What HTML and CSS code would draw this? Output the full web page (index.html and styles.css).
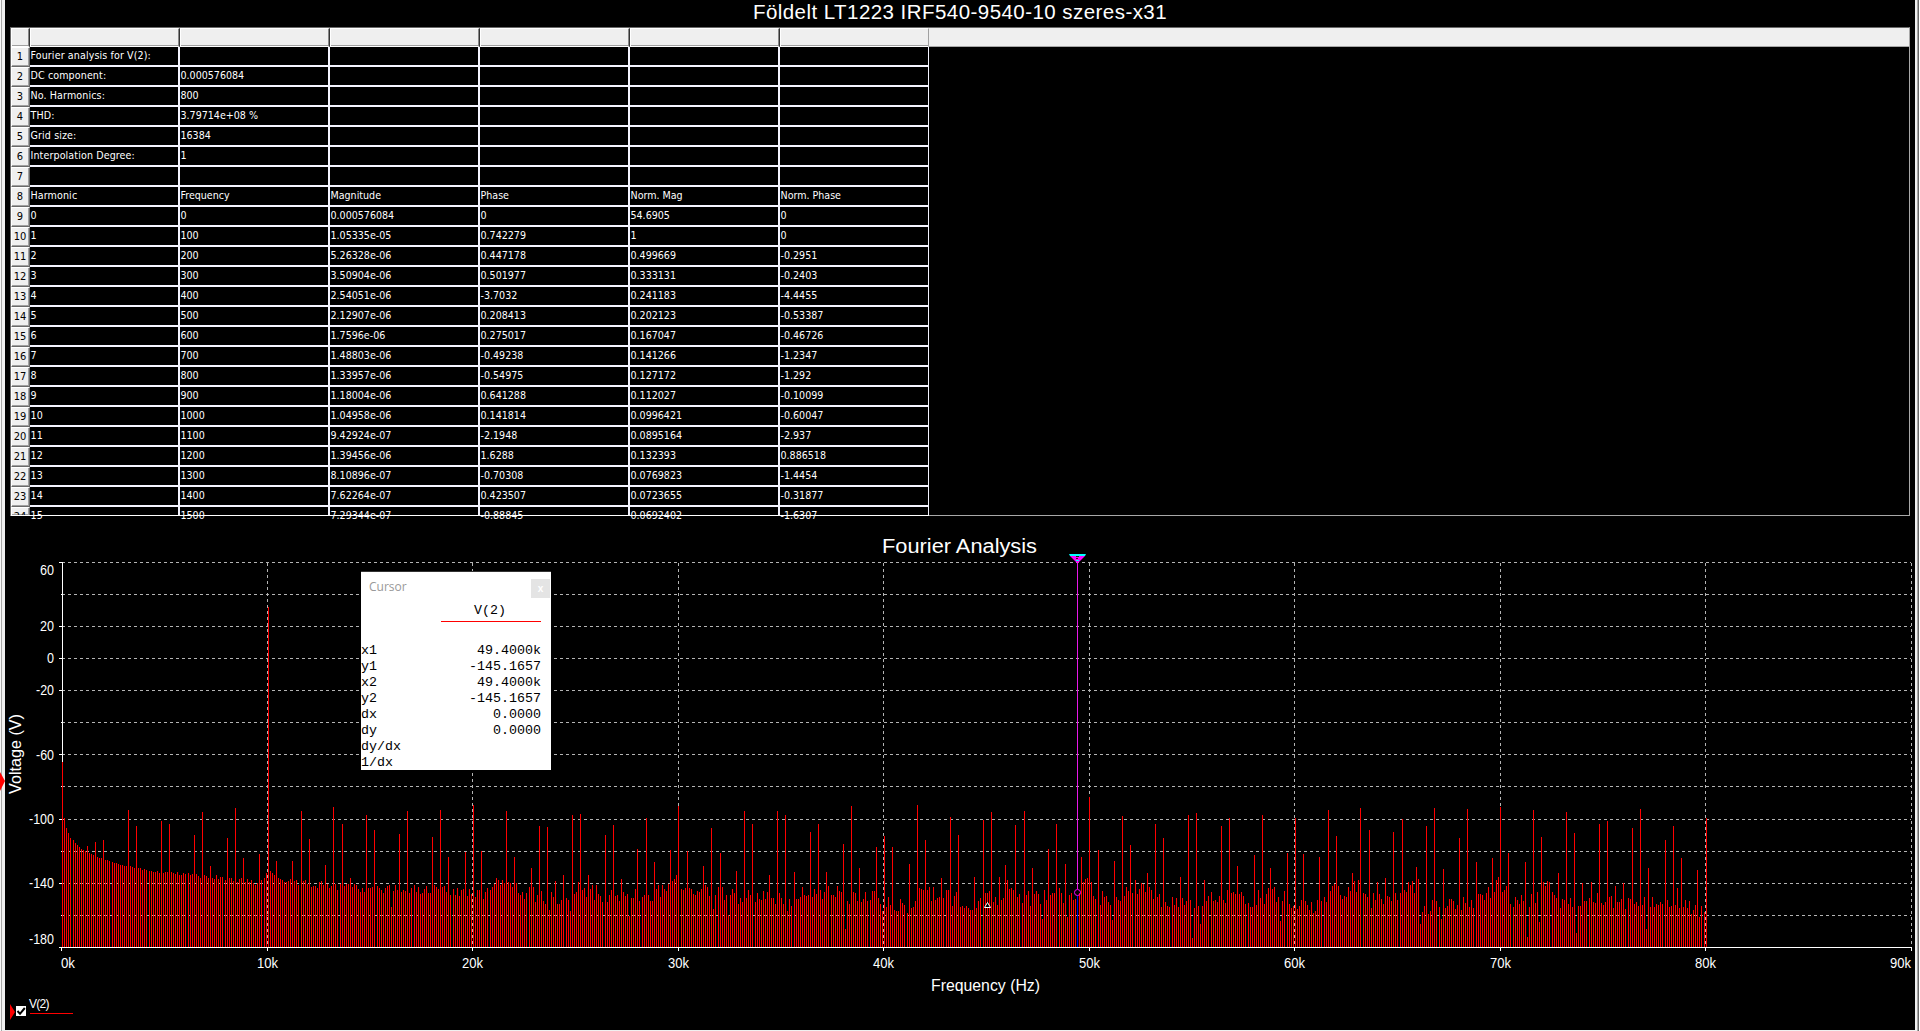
FILE: index.html
```html
<!DOCTYPE html>
<html lang="hu">
<head>
  <meta charset="UTF-8" />
  <title>Földelt LT1223 IRF540-9540-10 szeres-x31</title>
  <link rel="stylesheet" href="styles.css">
</head>
<body>
  <main class="grapher">
    <h1 class="page-title">Földelt LT1223 IRF540-9540-10 szeres-x31</h1>

    <div class="sheet" id="sheet">
      <div class="sheet-head">
        <span class="corner"></span>
        <span></span><span></span><span></span><span></span><span></span><span></span>
      </div>
    </div>

    <svg class="plot" id="plot" viewBox="5 516 1910 469" width="1910" height="469">
      <text class="plot-title" x="882" y="553" textLength="155" lengthAdjust="spacingAndGlyphs">Fourier Analysis</text>
      <g id="grid"></g>
      <path id="bars" class="bars" />
      <g id="axes"></g>
      <text class="axis-title" x="931" y="991" textLength="109" lengthAdjust="spacingAndGlyphs">Frequency (Hz)</text>
      <text class="axis-title" transform="translate(21 794) rotate(-90)" textLength="80" lengthAdjust="spacingAndGlyphs">Voltage (V)</text>

      <!-- trace marker on the left frame -->
      <path class="red" d="M0 772 L5 781 L0 791 Z" />

      <!-- cursors -->
      <path class="cursor-line" d="M1077.5 562 V889" />
      <path class="cursor-tail" d="M1077.5 896 V947" />
      <path class="magenta" d="M1070 556 H1085 L1078 563 H1077 Z" />
      <path class="cyan" d="M1069 554 H1086 L1085 556 H1070 Z M1076 560 H1079 V561 H1076 Z" />
      <path class="handle-dot" d="M1076 556 H1079 V557 H1076 Z M1076 558 H1078 V559 H1076 Z" />
      <circle class="cursor-ring" cx="1077.5" cy="892.5" r="3" />
      <path class="pointer" d="M987.5 902.5 L984.5 907.5 H990.5 Z" />
    </svg>

    <div class="legend">
      <svg class="legend-arrow" width="5" height="16" viewBox="0 0 5 16"><path class="red" d="M0 0 L5 8 L0 16 Z" /></svg>
      <svg class="legend-check" width="10" height="10" viewBox="0 0 10 10"><path d="M1.5 5 L4 7.8 L8.8 2" /></svg>
      <span class="legend-name">V(2)</span>
    </div>

    <div class="cursor-window">
      <div class="cursor-bar"><span>Cursor</span><button>x</button></div>
      <div class="cursor-trace">V(2)</div>
      <dl class="cursor-values">
        <dt>x1</dt><dd>49.4000k</dd>
        <dt>y1</dt><dd>-145.1657</dd>
        <dt>x2</dt><dd>49.4000k</dd>
        <dt>y2</dt><dd>-145.1657</dd>
        <dt>dx</dt><dd>0.0000</dd>
        <dt>dy</dt><dd>0.0000</dd>
        <dt>dy/dx</dt><dd></dd>
        <dt>1/dx</dt><dd></dd>
      </dl>
    </div>
  </main>

  <script>
    const rows = [
      ["Fourier analysis for V(2):"],
      ["DC component:", "0.000576084"],
      ["No. Harmonics:", "800"],
      ["THD:", "3.79714e+08 %"],
      ["Grid size:", "16384"],
      ["Interpolation Degree:", "1"],
      [],
      ["Harmonic", "Frequency", "Magnitude", "Phase", "Norm. Mag", "Norm. Phase"],
      ["0", "0", "0.000576084", "0", "54.6905", "0"],
      ["1", "100", "1.05335e-05", "0.742279", "1", "0"],
      ["2", "200", "5.26328e-06", "0.447178", "0.499669", "-0.2951"],
      ["3", "300", "3.50904e-06", "0.501977", "0.333131", "-0.2403"],
      ["4", "400", "2.54051e-06", "-3.7032", "0.241183", "-4.4455"],
      ["5", "500", "2.12907e-06", "0.208413", "0.202123", "-0.53387"],
      ["6", "600", "1.7596e-06", "0.275017", "0.167047", "-0.46726"],
      ["7", "700", "1.48803e-06", "-0.49238", "0.141266", "-1.2347"],
      ["8", "800", "1.33957e-06", "-0.54975", "0.127172", "-1.292"],
      ["9", "900", "1.18004e-06", "0.641288", "0.112027", "-0.10099"],
      ["10", "1000", "1.04958e-06", "0.141814", "0.0996421", "-0.60047"],
      ["11", "1100", "9.42924e-07", "-2.1948", "0.0895164", "-2.937"],
      ["12", "1200", "1.39456e-06", "1.6288", "0.132393", "0.886518"],
      ["13", "1300", "8.10896e-07", "-0.70308", "0.0769823", "-1.4454"],
      ["14", "1400", "7.62264e-07", "0.423507", "0.0723655", "-0.31877"],
      ["15", "1500", "7.29344e-07", "-0.88845", "0.0692402", "-1.6307"]
    ];

    const sheet = document.getElementById("sheet");
    rows.forEach((row, i) => {
      let html = `<span class="row-no">${i + 1}</span>`;
      for (let c = 0; c < 6; c++) html += `<span class="cell">${row[c] || ""}</span>`;
      const div = document.createElement("div");
      div.className = "sheet-row";
      div.innerHTML = html;
      sheet.appendChild(div);
    });

    // Grid and axes
    const top60 = 562;
    const xTicks = [62, 267, 472, 678, 883, 1089, 1294, 1500, 1705, 1911];
    let grid = "", axes = "";
    for (let i = 0; i < 12; i++) {
      const y = Math.floor(top60 + i * 32.13) + 0.5;
      grid += `<path class="grid-line" d="M62 ${y} H1911" />`;
      axes += `<path class="axis" d="M${i % 2 && i !== 3 ? 61 : 59} ${y} H62" />`;
    }
    xTicks.slice(1).forEach(x => {
      grid += `<path class="grid-line" d="M${x + 0.5} 563 V947" />`;
    });
    axes += `<path class="axis" d="M62.5 562 V762 M59 947.5 H1912" />`;
    xTicks.forEach((x, i) => {
      axes += `<path class="axis" d="M${i ? x + 0.5 : 61.5} 947 V951" />`;
      const tx = i === 0 ? 61 : i === 9 ? 1890 : x - 10;
      axes += `<text class="tick" x="${tx}" y="968" textLength="${i ? 21 : 14}" lengthAdjust="spacingAndGlyphs">${i * 10}k</text>`;
    });
    [[60, 575, 14], [20, 631, 14], [0, 663, 7], [-20, 695, 18], [-60, 760, 18],
     [-100, 824, 25], [-140, 888, 25], [-180, 944, 25]].forEach(([v, y, w]) => {
      axes += `<text class="tick" x="${54 - w}" y="${y}" textLength="${w}" lengthAdjust="spacingAndGlyphs">${v}</text>`;
    });
    document.getElementById("grid").innerHTML = grid;
    document.getElementById("axes").innerHTML = axes;

    // Peaks and dips: x, top
    const peaks = [
      87,846, 95,842, 103,840, 128,810, 136,826, 161,821, 169,824, 194,835, 202,812, 210,866,
      227,838, 235,808, 243,858, 259,854, 268,607, 276,861, 292,861, 301,811, 309,839, 325,865,
      333,807, 342,824, 350,878, 366,815, 374,830, 391,907, 399,834, 407,811, 432,837, 440,810,
      448,857, 465,852, 473,805, 481,851, 506,811, 514,857, 531,868, 539,826, 547,827, 549,910,
      555,881, 563,875, 570,911, 572,815, 580,814, 588,875, 605,835, 613,825, 621,879, 629,916,
      637,849, 646,818, 654,862, 670,850, 678,806, 687,851, 703,866, 711,828, 713,909, 720,853,
      728,915, 736,871, 744,811, 752,824, 769,875, 777,811, 785,815, 787,911, 794,872, 802,887,
      810,832, 818,824, 826,872, 843,844, 845,929, 851,806, 859,868, 876,847, 884,836, 892,847,
      906,913, 909,864, 917,805, 925,840, 941,878, 950,817, 958,835, 974,877, 982,820, 991,812,
      999,877, 1005,865, 1007,880, 1015,825, 1024,811, 1032,868, 1042,919, 1048,849, 1056,824,
      1065,864, 1067,917, 1081,857, 1089,797, 1098,850, 1112,920, 1114,861, 1122,816, 1130,845,
      1147,873, 1155,824, 1163,838, 1180,877, 1188,815, 1192,938, 1196,813, 1200,924, 1204,880,
      1221,826, 1229,818, 1237,866, 1254,855, 1262,815, 1270,868, 1280,921, 1287,853, 1295,818,
      1303,854, 1319,857, 1328,810, 1336,836, 1352,873, 1360,808, 1369,830, 1377,882, 1385,878,
      1393,832, 1402,819, 1416,867, 1418,879, 1420,924, 1426,826, 1434,808, 1441,919, 1443,869,
      1459,838, 1467,809, 1475,862, 1492,858, 1500,807, 1508,853, 1525,862, 1527,937, 1533,810,
      1539,922, 1541,837, 1558,873, 1566,812, 1574,833, 1576,933, 1582,883, 1591,882, 1599,824,
      1607,821, 1615,886, 1623,883, 1632,828, 1640,809, 1646,929, 1648,868, 1664,840, 1673,826,
      1677,888, 1681,858, 1697,870, 1706,818
    ];
    // Noise floor outline: x, top
    const floor = [
      62,762, 64,818, 66,828, 68,833, 70,838, 73,840, 75,843, 77,845, 79,847, 83,850, 90,854,
      100,858, 110,861, 120,865, 140,869, 152,871, 173,873, 190,875, 210,877, 235,879, 260,883,
      265,878, 269,871, 276,880, 300,883, 330,886, 360,888, 400,889, 430,889, 470,892, 485,895,
      497,884, 510,889, 525,892, 560,900, 575,888, 600,894, 625,896, 650,895, 676,883, 682,884,
      700,890, 720,895, 745,898, 780,899, 800,899, 830,893, 860,898, 872,896, 883,904, 905,906,
      925,892, 955,899, 970,905, 990,898, 1012,894, 1030,899, 1060,896, 1077,896, 1089,881,
      1097,898, 1110,900, 1133,885, 1160,902, 1190,903, 1225,897, 1250,900, 1285,892, 1295,906,
      1320,908, 1332,888, 1345,895, 1358,885, 1370,900, 1400,900, 1412,883, 1420,912, 1450,903,
      1470,905, 1490,891, 1500,882, 1510,900, 1530,902, 1546,884, 1558,902, 1580,903, 1600,898,
      1620,905, 1650,905, 1680,905, 1704,913
    ];

    // snap every peak to its harmonic
    const x0 = 62.235, step = 2.0542;
    const special = {};
    for (let i = 0; i < peaks.length; i += 2) {
      special[Math.round((peaks[i] - x0) / step)] = peaks[i + 1];
    }

    function floorAt(x) {
      let i = 0;
      while (i < floor.length - 4 && floor[i + 2] < x) i += 2;
      const t = (x - floor[i]) / (floor[i + 2] - floor[i]);
      return floor[i + 1] + t * (floor[i + 3] - floor[i + 1]);
    }

    let seed = 1223, d = "";
    for (let n = 0; n <= 800; n++) {
      const x = Math.round(x0 + step * n);
      seed = (seed * 16807) % 2147483647;
      const jitter = (seed / 2147483647 - 0.5) * Math.min(16, Math.max(0, (x - 90) / 28));
      const y = special[n] || Math.round(floorAt(x) + jitter);
      d += `M${x + 0.5} ${y}V947`;
    }
    document.getElementById("bars").setAttribute("d", d);
  </script>
</body>
</html>
```
FILE: styles.css
```css
body {
  margin: 0;
  height: 1031px;
  overflow: hidden;
  font-family: "Liberation Sans", Arial, sans-serif;
  color: #fff;
  background: linear-gradient(to right, #f8f8f8 1px, #a8a8a8 1px, #a8a8a8 2px, #f0f0f0 2px, #f0f0f0 1917px, #a8a8a8 1917px, #a8a8a8 1918px, #696969 1918px, #696969 1919px, #fff 1919px);
}

.grapher {
  position: relative;
  width: 1910px;
  height: 1030px;
  margin-left: 5px;
  background: #000;
}

.page-title {
  margin: 0;
  height: 27px;
  line-height: 24px;
  font-size: 20.5px;
  font-weight: normal;
  text-align: center;
  letter-spacing: 0.45px;
}

/* Result sheet */
.sheet {
  position: relative;
  box-sizing: border-box;
  width: 1900px;
  height: 489px;
  margin-left: 5px;
  border: 1px solid #a8a8a8;
  border-top-color: #696969;
  border-left-color: #696969;
  font-family: "DejaVu Sans Condensed", "DejaVu Sans", Tahoma, sans-serif;
  font-stretch: condensed;
  font-size: 10.6px;
}

.sheet::after {
  content: "";
  position: absolute;
  left: 0;
  bottom: -1px;
  width: 918px;
  height: 1px;
  background: #fff;
}

.sheet-head {
  display: flex;
  height: 19px;
  box-sizing: border-box;
  background: #efefef;
  border-bottom: 1px solid #a8a8a8;
}

.sheet-head span {
  box-sizing: border-box;
  width: 150px;
  height: 19px;
  border-top: 1px solid #fff;
  border-left: 1px solid #fff;
  border-right: 2px ridge #888;
  border-bottom: 1px solid #fff;
  box-shadow: inset 0 -1px #a0a0a0;
}

.sheet-head .corner {
  width: 19px;
}

.sheet-head span:last-child {
  width: 149px;
  border-right: 1px solid #a0a0a0;
}

.sheet-row {
  display: flex;
  height: 20px;
}

.sheet-row:last-child {
  height: 8px;
}

.row-no {
  box-sizing: border-box;
  width: 19px;
  overflow: hidden;
  background: #efefef;
  border-top: 1px solid #fff;
  border-left: 1px solid #fff;
  border-right: 1px solid #696969;
  border-bottom: 1px solid #696969;
  box-shadow: inset -1px -1px #a0a0a0;
  color: #000;
  font-size: 11px;
  line-height: 17px;
  text-align: center;
  text-indent: -1px;
}

.cell {
  box-sizing: border-box;
  width: 150px;
  padding-left: 0.5px;
  border-right: 2px solid #f4f4ff;
  border-bottom: 2px solid #f4f4ff;
  line-height: 16px;
  white-space: nowrap;
}

.cell:nth-child(2) {
  letter-spacing: 0.12px;
}

.cell:last-child {
  width: 149px;
  border-right-width: 1px;
}

.sheet-row:last-child .row-no,
.sheet-row:last-child .cell {
  border-bottom: 0;
}

/* Plot */
.plot {
  display: block;
  overflow: visible;
}

.plot text {
  fill: #fff;
}

.plot-title {
  font-size: 20px;
}

.axis-title {
  font-size: 16.5px;
}

.tick {
  font-size: 14px;
}

.grid-line {
  stroke: #b4b4b4;
  stroke-dasharray: 3 3;
  shape-rendering: crispEdges;
}

.axis {
  stroke: #fff;
  shape-rendering: crispEdges;
}

.bars {
  stroke: #f00;
  fill: none;
  shape-rendering: crispEdges;
}

.red {
  fill: #f00;
}

.magenta {
  fill: #f0f;
}

.cyan {
  fill: #0ff;
}

.handle-dot {
  fill: #220;
}

.cursor-line {
  stroke: #e818e8;
}

.cursor-tail {
  stroke: #0000d8;
}

.cursor-ring {
  fill: none;
  stroke: #f0f;
}

.pointer {
  fill: #000;
  stroke: #fff;
}

/* Legend */
.legend {
  display: flex;
  align-items: flex-start;
  height: 45px;
  padding-left: 5px;
}

.legend-arrow {
  margin-top: 19px;
}

.legend-check {
  margin: 21px 0 0 1px;
  background: #fff;
}

.legend-check path {
  fill: none;
  stroke: #000;
  stroke-width: 2;
}

.legend-name {
  width: 43px;
  height: 16px;
  margin: 12px 0 0 4px;
  border-bottom: 1px solid #f00;
  font-size: 12px;
  line-height: 14px;
  letter-spacing: -0.7px;
  text-indent: -1px;
}

/* Floating cursor window */
.cursor-window {
  position: absolute;
  left: 356px;
  top: 572px;
  width: 190px;
  height: 198px;
  background: #fff;
  color: #000;
  font: 13.33px/16px "Liberation Mono", "Courier New", monospace;
  box-shadow: 0 -1px #333;
}

.cursor-bar {
  display: flex;
  justify-content: space-between;
  padding: 7px 1px 0 8px;
  font: 12px/16px "Open Sans", sans-serif;
  color: #999;
}

.cursor-bar button {
  width: 19px;
  height: 19px;
  padding: 0;
  border: 0;
  background: #e4e4e4;
  color: #fff;
  font: bold 10px/18px "Liberation Sans", sans-serif;
}

.cursor-trace {
  width: 98px;
  height: 18px;
  margin: 5px 0 0 80px;
  padding-right: 2px;
  border-bottom: 1px solid #f00;
  text-align: center;
}

.cursor-values {
  display: grid;
  grid-template-columns: 60px 120px;
  grid-auto-rows: 16px;
  margin: 21px 0 0;
}

.cursor-values dd {
  margin: 0;
  text-align: right;
}
```
